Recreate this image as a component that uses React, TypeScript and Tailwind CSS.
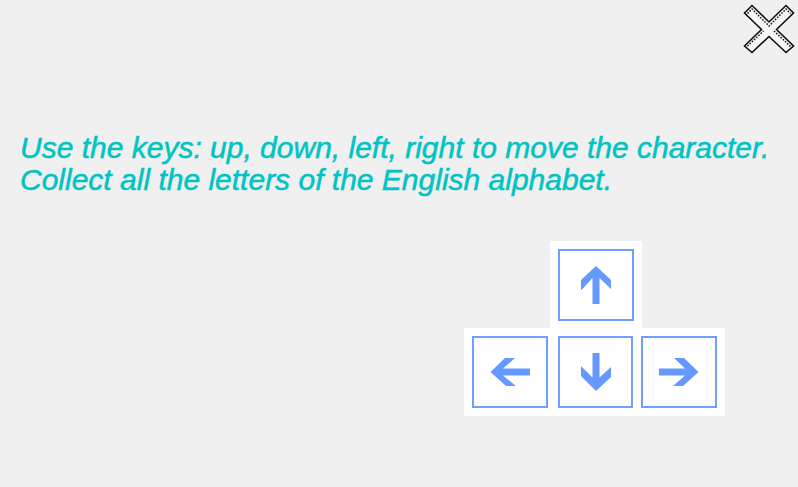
const ARROWS = {
  up: "38,17 53,31 53,40 41.5,29 41.5,55 34.5,55 34.5,29 23,41.5 23,31",
  left: "18.5,36 33,22 43,22 31,32.5 58,32.5 58,39.5 31,39.5 44,50 34,50",
  down: "38,55 23,40 23,30 34.5,41.5 34.5,17 41.5,17 41.5,41.5 53,31 53,41",
  right: "57.5,36 43,22 33,22 44,32.5 18,32.5 18,39.5 44,39.5 32,50 42,50",
};

function Key({ dir, className }: { dir: keyof typeof ARROWS; className: string }) {
  return (
    <button
      type="button"
      aria-label={dir}
      className={`h-[72px] overflow-hidden border-2 border-[#70a0ff] bg-white ${className}`}
    >
      <svg viewBox="2 2 72 68" className="h-[68px] w-[72px] max-w-none fill-[#6699ff]">
        <polygon points={ARROWS[dir]} />
      </svg>
    </button>
  );
}

export default function App() {
  return (
    <main className="flex min-h-screen flex-col bg-[#f0f0f0]">
      <header className="flex justify-end">
        <button type="button" aria-label="Close" className="size-[60px]">
          <svg viewBox="0 0 60 60" className="size-[60px]" fill="none" stroke="#111">
            <path
              d="M6.5 13 14 5.5 31 22 48 5.5 55.5 13 38.5 29.5 55.5 46 48 52.5 31 36.5 14 52.5 6.5 46 23.5 29.5Z"
              fill="#f6f6f6"
              strokeWidth="1.6"
            />
            <path
              d="M9.5 13.5 14 9 31 26 48 9 52.5 13.5M9.5 46 25.5 31M36 31 52.5 46.5"
              strokeWidth="1.5"
              strokeDasharray="1.5 1.5"
            />
          </svg>
        </button>
      </header>
      <p className="mt-[72px] pl-5 font-['Liberation_Sans',Arial,sans-serif] text-[30px] leading-8 text-[#00c3c3] italic [-webkit-text-stroke:0.5px_#00c3c3]">
        Use the keys: up, down, left, right to move the character.
        <br />
        Collect all the letters of the English alphabet.
      </p>
      <div className="mt-[45px] mr-[73px] flex flex-col items-end pb-[71px]">
        <div className="mr-[83px] flex h-[87px] w-[92px] bg-white p-2">
          <Key dir="up" className="w-[76px]" />
        </div>
        <div className="grid grid-cols-[86px_83px_76px] bg-white p-2">
          <Key dir="left" className="w-[76px]" />
          <Key dir="down" className="w-[75px]" />
          <Key dir="right" className="w-[76px]" />
        </div>
      </div>
    </main>
  );
}
